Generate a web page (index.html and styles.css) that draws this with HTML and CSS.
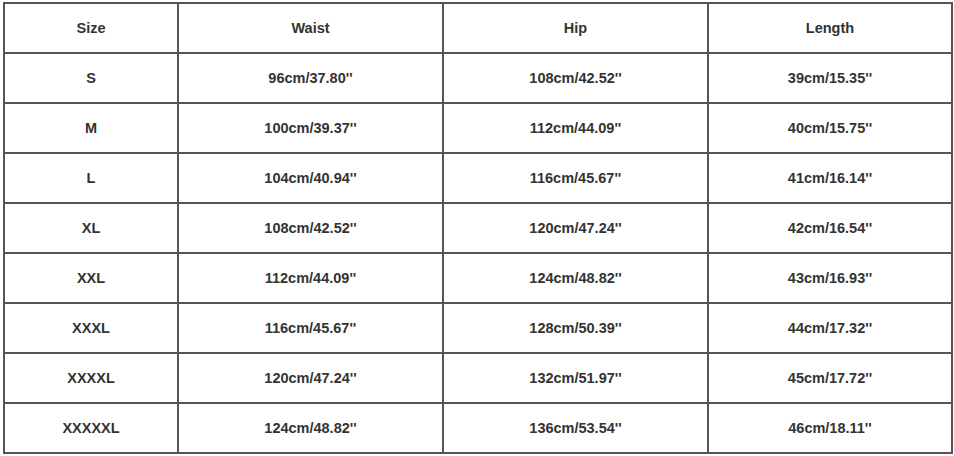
FILE: index.html
```html
<!DOCTYPE html>
<html>
<head>
<meta charset="utf-8">
<link rel="stylesheet" href="styles.css">
</head>
<body>
<table class="size-table">
  <colgroup>
    <col class="c-size"><col class="c-waist"><col class="c-hip"><col class="c-length">
  </colgroup>
  <thead>
    <tr><th>Size</th><th>Waist</th><th>Hip</th><th>Length</th></tr>
  </thead>
  <tbody>
    <tr><td>S</td><td>96cm/37.80''</td><td>108cm/42.52''</td><td>39cm/15.35''</td></tr>
    <tr><td>M</td><td>100cm/39.37''</td><td>112cm/44.09''</td><td>40cm/15.75''</td></tr>
    <tr><td>L</td><td>104cm/40.94''</td><td>116cm/45.67''</td><td>41cm/16.14''</td></tr>
    <tr><td>XL</td><td>108cm/42.52''</td><td>120cm/47.24''</td><td>42cm/16.54''</td></tr>
    <tr><td>XXL</td><td>112cm/44.09''</td><td>124cm/48.82''</td><td>43cm/16.93''</td></tr>
    <tr><td>XXXL</td><td>116cm/45.67''</td><td>128cm/50.39''</td><td>44cm/17.32''</td></tr>
    <tr><td>XXXXL</td><td>120cm/47.24''</td><td>132cm/51.97''</td><td>45cm/17.72''</td></tr>
    <tr><td>XXXXXL</td><td>124cm/48.82''</td><td>136cm/53.54''</td><td>46cm/18.11''</td></tr>
  </tbody>
</table>
</body>
</html>
```
FILE: styles.css
```css
html, body {
  margin: 0;
  padding: 0;
  background: #fff;
}
body {
  padding: 2px 3px 0 3px;
  font-family: "Liberation Sans", Arial, sans-serif;
}
.size-table {
  border-collapse: collapse;
  table-layout: fixed;
  width: 948px;
}
.c-size { width: 174px; }
.c-waist { width: 265px; }
.c-hip { width: 265px; }
.c-length { width: 244px; }
.size-table th,
.size-table td {
  height: 47px;
  padding: 0 0 1px 0;
  border: 2px solid #555;
  text-align: center;
  vertical-align: middle;
  font-size: 14.5px;
  font-weight: bold;
  color: #333;
}
```
